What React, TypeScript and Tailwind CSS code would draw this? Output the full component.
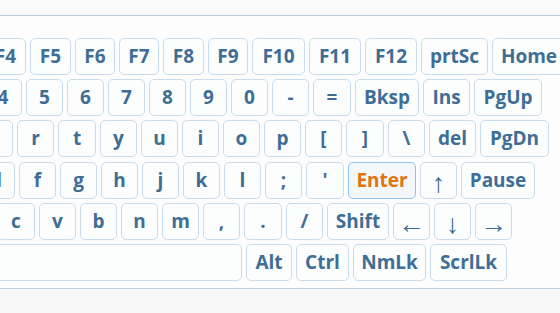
type Key = { label: string; w: number; hot?: boolean; thin?: boolean };

// each row starts off the left edge of the view; offset is that row's first key x
const rows: { offset: string; keys: Key[] }[] = [
  {
    offset: "ml-[-15px]",
    keys: [
      { label: "F4", w: 41 },
      { label: "F5", w: 41 },
      { label: "F6", w: 40 },
      { label: "F7", w: 40 },
      { label: "F8", w: 41 },
      { label: "F9", w: 40 },
      { label: "F10", w: 53 },
      { label: "F11", w: 52 },
      { label: "F12", w: 52 },
      { label: "prtSc", w: 67 },
      { label: "Home", w: 74 },
    ],
  },
  {
    offset: "ml-[-16px]",
    keys: [
      { label: "4", w: 38 },
      { label: "5", w: 37 },
      { label: "6", w: 37 },
      { label: "7", w: 37 },
      { label: "8", w: 37 },
      { label: "9", w: 37 },
      { label: "0", w: 37 },
      { label: "-", w: 37 },
      { label: "=", w: 38 },
      { label: "Bksp", w: 64 },
      { label: "Ins", w: 47 },
      { label: "PgUp", w: 68 },
    ],
  },
  {
    offset: "ml-[-24px]",
    keys: [
      { label: "e", w: 37 },
      { label: "r", w: 37 },
      { label: "t", w: 38 },
      { label: "y", w: 37 },
      { label: "u", w: 37 },
      { label: "i", w: 37 },
      { label: "o", w: 37 },
      { label: "p", w: 37 },
      { label: "[", w: 37 },
      { label: "]", w: 38 },
      { label: "\\", w: 37 },
      { label: "del", w: 47 },
      { label: "PgDn", w: 69 },
    ],
  },
  {
    offset: "ml-[-23px]",
    keys: [
      { label: "d", w: 38 },
      { label: "f", w: 37 },
      { label: "g", w: 37 },
      { label: "h", w: 37 },
      { label: "j", w: 37 },
      { label: "k", w: 37 },
      { label: "l", w: 37 },
      { label: ";", w: 37 },
      { label: "'", w: 38 },
      { label: "Enter", w: 68, hot: true },
      { label: "↑", w: 37, thin: true },
      { label: "Pause", w: 74 },
    ],
  },
  {
    offset: "ml-[-3px]",
    keys: [
      { label: "c", w: 38 },
      { label: "v", w: 37 },
      { label: "b", w: 37 },
      { label: "n", w: 37 },
      { label: "m", w: 37 },
      { label: ",", w: 37 },
      { label: ".", w: 38 },
      { label: "/", w: 37 },
      { label: "Shift", w: 62 },
      { label: "←", w: 37, thin: true },
      { label: "↓", w: 37, thin: true },
      { label: "→", w: 37, thin: true },
    ],
  },
  {
    offset: "ml-[-40px]",
    keys: [
      { label: "", w: 282 },
      { label: "Alt", w: 46 },
      { label: "Ctrl", w: 53 },
      { label: "NmLk", w: 73 },
      { label: "ScrlLk", w: 77 },
    ],
  },
];

function KeyCap({ k }: { k: Key }) {
  return (
    <div
      style={{ width: k.w }}
      className={
        "shrink-0 h-[37px] flex items-center justify-center rounded-[5px] border leading-none " +
        (k.hot
          ? "border-[#8ec3ee] bg-[#f3f7fa] text-[#e2730f] font-bold text-[19px]"
          : k.thin
          ? "border-[#c8dcec] bg-[#fcfdfd] text-[#3f6e95] font-normal text-[27px] pt-[3px] font-['Noto_Sans',sans-serif]"
          : "border-[#c8dcec] bg-[#fcfdfd] text-[#3f6e95] font-bold text-[19px]")
      }
    >
      {k.label}
    </div>
  );
}

export default function App() {
  return (
    <div className="w-[560px] h-[313px] overflow-hidden bg-[#f8f8f8] font-['Open_Sans',sans-serif]">
      <div className="h-[15px] bg-[#fafafa]" />
      <div className="h-[274px] border-y border-[#b7cfe1] bg-[#fdfdfd] pt-[22px] overflow-hidden">
        <div className="flex flex-col gap-[4.2px]">
          {rows.map((row, i) => (
            <div key={i} className={"flex gap-1 " + row.offset}>
              {row.keys.map((k, j) => (
                <KeyCap key={j} k={k} />
              ))}
            </div>
          ))}
        </div>
      </div>
    </div>
  );
}
